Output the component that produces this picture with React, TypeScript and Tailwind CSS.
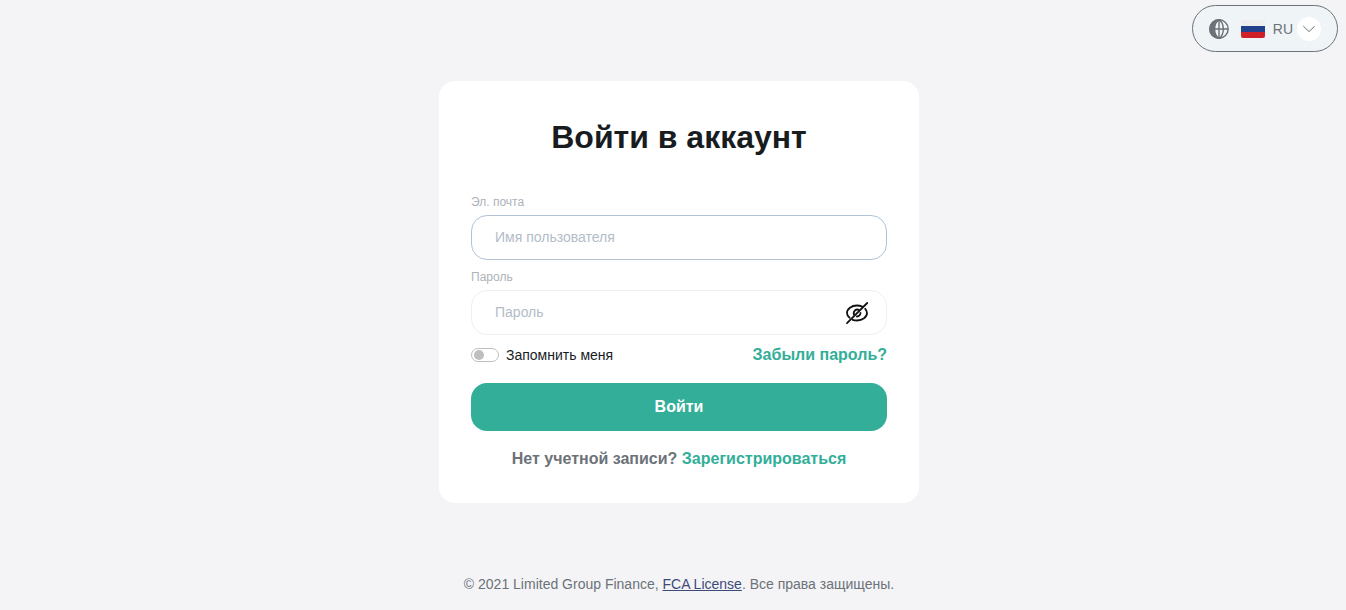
import { useState } from "react";

function GlobeIcon() {
  return (
    <svg viewBox="0 0 20 20" className="size-5 shrink-0 text-[#6c7278]" fill="none" stroke="currentColor" strokeWidth="1.4" aria-hidden="true">
      <circle cx="10" cy="10" r="9.200" />
      <path d="M10 .8a9.200 9.200 0 0 0 0 18.400C7 17.500 5.600 14 5.600 10S7 2.500 10 .8Z" fill="currentColor" />
      <path d="M10 1v18M5.500 10H19" />
      <path d="M10 .8c3 1.700 4.300 5.200 4.300 9.200S13 17.500 10 19.200" />
    </svg>
  );
}

function FlagIcon() {
  return (
    <svg viewBox="0 0 24 18" className="h-[18px] w-6 shrink-0" aria-hidden="true">
      <path d="M2 0h20a2 2 0 0 1 2 2v4H0V2a2 2 0 0 1 2-2Z" fill="#eeeeee" />
      <path d="M0 6h24v6H0Z" fill="#22408c" />
      <path d="M0 12h24v4a2 2 0 0 1-2 2H2a2 2 0 0 1-2-2Z" fill="#ce2028" />
    </svg>
  );
}

function HiddenEyeIcon() {
  return (
    <svg viewBox="0 0 24 24" className="size-6" fill="none" stroke="#111111" strokeWidth="1.8" strokeLinecap="round" aria-hidden="true">
      <path d="M4.600 16.800C2.900 15.500 2 13.800 2 12c0-4.200 4.500-7.500 10-7.500 1.900 0 3.700.4 5.200 1.100" />
      <path d="M20.200 7.800C21.400 9 22 10.400 22 12c0 4.200-4.500 7.500-10 7.500-1.600 0-3-.2-4.300-.7" />
      <path d="M9.100 13.700A3.600 3.600 0 0 1 13.900 8.900" />
      <path d="M15.500 11.900a3.500 3.500 0 0 1-3.600 3.600" />
      <path d="M2 22.200 22.200 2" />
    </svg>
  );
}

function LanguageButton() {
  return (
    <button type="button" aria-haspopup="listbox" className="flex h-[47px] items-center rounded-full border border-[#6c7278] bg-[#eff4f7] px-4 text-sm text-[#6c7278]">
      <GlobeIcon />
      <span className="ml-3"><FlagIcon /></span>
      <span className="mr-1 ml-2">RU</span>
      <span className="flex size-6 items-center justify-center rounded-full bg-white">
        <svg viewBox="0 0 12 8" className="h-2 w-3" fill="none" stroke="#6c7278" strokeWidth="1" strokeLinecap="round" aria-hidden="true">
          <path d="m.6 1.400 5.400 5.200 5.400-5.200" />
        </svg>
      </span>
    </button>
  );
}

const labelClass = "block text-xs leading-4 text-[#acb3ba]";
const inputClass =
  "block h-[45px] w-full rounded-2xl border bg-white pb-0.5 pl-[23px] text-sm text-[#191c1f] outline-none placeholder:text-[#b3bcc7]";

export default function App() {
  const [visible, setVisible] = useState(false);

  return (
    <div className="flex min-h-screen flex-col bg-[#f4f4f7] font-['Liberation_Sans',Arial,sans-serif]">
      <header className="flex justify-end pt-[5px] pr-2">
        <LanguageButton />
      </header>

      <main className="mt-[29px] flex justify-center pl-3">
        <form className="w-full max-w-[480px] rounded-2xl bg-white px-8 pt-9 pb-8" onSubmit={(e) => e.preventDefault()}>
          <h1 className="text-center text-[32px] leading-10 font-bold text-[#191c1f]">Войти в аккаунт</h1>

          <div className="mt-[37px]">
            <label htmlFor="email" className={labelClass}>Эл. почта</label>
            <input id="email" type="text" placeholder="Имя пользователя" className={`${inputClass} mt-[5px] border-[#b0c4d6] pr-6`} />
          </div>

          <div className="mt-[9px]">
            <label htmlFor="password" className={labelClass}>Пароль</label>
            <div className="relative mt-[5px]">
              <input id="password" type={visible ? "text" : "password"} placeholder="Пароль" className={`${inputClass} border-[#eeeff5] pr-14`} />
              <button
                type="button"
                aria-label="Показать пароль"
                onClick={() => setVisible(!visible)}
                className="absolute inset-y-0 right-[18px] flex items-center"
              >
                <HiddenEyeIcon />
              </button>
            </div>
          </div>

          <div className="mt-2 flex items-center justify-between">
            <label className="flex items-center gap-[7px] text-sm leading-6 text-[#191c1f]">
              <input
                type="checkbox"
                className="flex h-3.5 w-7 appearance-none items-center rounded-full border border-[#bfbfbf] bg-white px-0.5 before:block before:size-2.5 before:rounded-full before:bg-[#bfbfbf] checked:justify-end checked:border-[#32ae99] checked:before:bg-[#32ae99]"
              />
              Запомнить меня
            </label>
            <a href="#forgot" className="leading-6 font-bold text-[#32ae99]">Забыли пароль?</a>
          </div>

          <button type="submit" className="mt-4 block h-12 w-full rounded-2xl bg-[#32ae99] text-base font-bold text-white">
            Войти
          </button>

          <p className="mt-4 text-center leading-6 font-bold text-[#6c7278]">
            Нет учетной записи? <a href="#register" className="text-[#32ae99]">Зарегистрироваться</a>
          </p>
        </form>
      </main>

      <footer className="mt-auto pt-8 pb-4 pl-3 text-center text-sm text-[#6c7278]">
        © 2021 Limited Group Finance,{" "}
        <a href="#license" className="text-[#3c4a78] underline">FCA License</a>. Все права защищены.
      </footer>
    </div>
  );
}
